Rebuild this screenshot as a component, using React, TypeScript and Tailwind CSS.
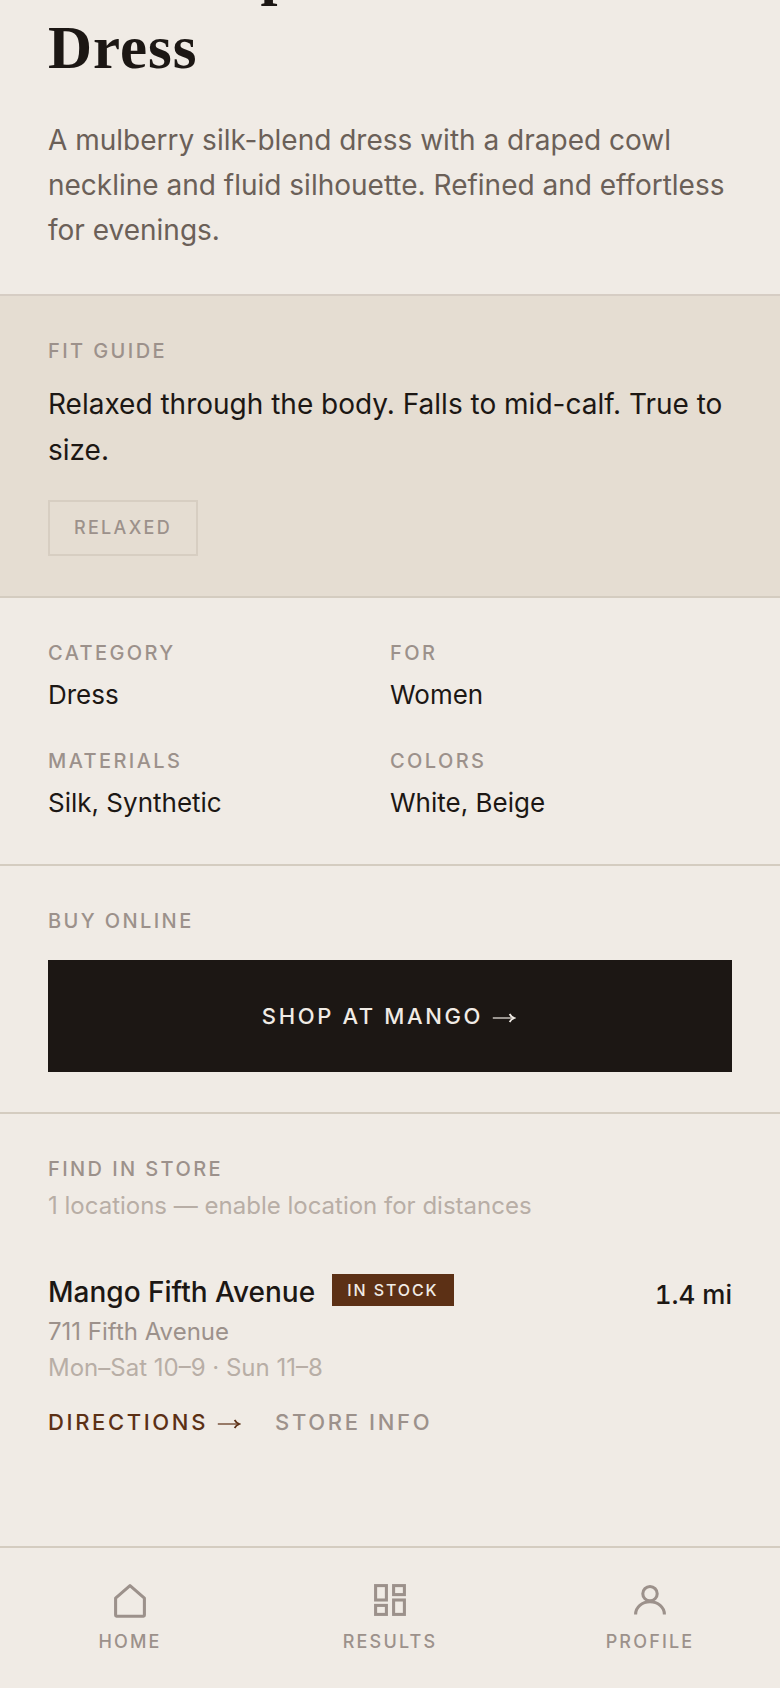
import type { ReactNode } from "react";

const LABEL = "text-[20px] leading-[30px] font-medium tracking-[2.4px] text-[#9c918b]";

function Label({ children }: { children: ReactNode }) {
  return <div className={LABEL}>{children}</div>;
}

function Arrow() {
  return (
    <svg className="mr-[2.6px] inline-block align-[0px]" width="24" height="12" viewBox="0 0 24 12" fill="none" stroke="currentColor">
      <path d="M0.8 6H22" strokeWidth="1.2" />
      <path d="M17.6 2Q19 4.8 22.4 6Q19 7.2 17.6 10" strokeWidth="1.7" />
    </svg>
  );
}

function Detail({ label, value }: { label: string; value: string }) {
  return (
    <div>
      <Label>{label}</Label>
      <div className="mt-[7px] h-[41px] text-[26px] leading-[39px] text-[#1c1714]">{value}</div>
    </div>
  );
}

function NavItem({ label, children }: { label: string; children: ReactNode }) {
  return (
    <a className="flex flex-1 flex-col items-center pt-[34px] text-[#9c918b]">
      <svg width="36" height="36" viewBox="0 0 20 20" fill="none" stroke="currentColor" strokeWidth="1.7">
        {children}
      </svg>
      <span className="mt-[10px] text-[18px] leading-[27px] font-medium tracking-[2.16px]">{label}</span>
    </a>
  );
}

export default function App() {
  return (
    <div className="flex h-[1688px] w-[780px] flex-col overflow-hidden bg-[#f0ebe5] font-['Inter',sans-serif] text-[#1c1714]">
      <section className="flex h-[296px] shrink-0 flex-col justify-end border-b-2 border-[#d6cdc4] px-12 pb-[41.6px]">
        <h1 className="shrink-0 font-['Liberation_Serif',serif] text-[61px] leading-[75px] font-bold">
          <span className="tracking-[-0.7px]">Satin Slip</span>
          <br />
          <span className="tracking-[1px]">Dress</span>
        </h1>
        <p className="mt-[33.5px] shrink-0 text-[28px] leading-[44.8px] text-[#6b6058]">
          A mulberry silk-blend dress with a draped cowl neckline and fluid silhouette. Refined and effortless for
          evenings.
        </p>
      </section>

      <section className="h-[302px] shrink-0 border-b-2 border-[#d4ccc0] bg-[#e5ddd2] px-12 pt-10">
        <Label>FIT GUIDE</Label>
        <p className="mt-4 text-[28px] leading-[45.5px]">Relaxed through the body. Falls to mid-calf. True to size.</p>
        <div className="mt-[27px] flex h-14 w-fit items-center border-2 border-[#d7cec2] px-6 pb-px text-[18px] leading-[27px] font-medium tracking-[2.3px] text-[#9c918b]">
          RELAXED
        </div>
      </section>

      <section className="grid h-[268px] shrink-0 grid-cols-2 content-start gap-y-[30px] border-b-2 border-[#d4ccc0] px-12 pt-10">
        <Detail label="CATEGORY" value="Dress" />
        <Detail label="FOR" value="Women" />
        <Detail label="MATERIALS" value="Silk, Synthetic" />
        <Detail label="COLORS" value="White, Beige" />
      </section>

      <section className="h-[248px] shrink-0 border-b-2 border-[#d4ccc0] px-12 pt-10">
        <Label>BUY ONLINE</Label>
        <button className="mt-6 flex h-28 w-full items-center justify-center bg-[#1c1714] text-[22px] font-medium tracking-[2.64px] text-[#f0ebe5]">
          <span>
            SHOP AT MANGO <Arrow />
          </span>
        </button>
      </section>

      <section className="flex-1 px-12 pt-10">
        <Label>FIND IN STORE</Label>
        <p className="mt-1 text-[24px] leading-9 text-[#b8aea6]">1 locations — enable location for distances</p>
        <div className="mt-[46px] flex items-start justify-between">
          <div className="flex items-start gap-[17px]">
            <h2 className="pt-px text-[28px] leading-[42px] font-medium">Mango Fifth Avenue</h2>
            <span className="mt-1 flex h-8 w-[122px] items-center bg-[#5c3015] pl-[15px] text-[16px] font-medium tracking-[1.92px] text-[#f0ebe5]">
              IN STOCK
            </span>
          </div>
          <span className="mt-[5px] text-[26px] leading-[39px] font-medium tabular-nums">1.4 mi</span>
        </div>
        <p className="text-[24px] leading-9 text-[#9c918b]">711 Fifth Avenue</p>
        <p className="text-[24px] leading-9 text-[#b8aea6]">Mon–Sat 10–9 · Sun 11–8</p>
        <div className="mt-5 flex gap-8 text-[22px] leading-[33px] font-medium tracking-[2.64px]">
          <a className="text-[#5c3015]">
            DIRECTIONS <Arrow />
          </a>
          <a className="text-[#9c918b]">STORE INFO</a>
        </div>
      </section>

      <nav className="flex h-[142px] shrink-0 border-t-2 border-[#d4ccc0]">
        <NavItem label="HOME">
          <path d="M2 9L10 2L18 9V18.5Q18 19 17.5 19H2.5Q2 19 2 18.5Z" strokeLinejoin="round" />
        </NavItem>
        <NavItem label="RESULTS">
          <rect x="2" y="2" width="6" height="8" />
          <rect x="12" y="2" width="6" height="5" />
          <rect x="12" y="10" width="6" height="8" />
          <rect x="2" y="13" width="6" height="5" />
        </NavItem>
        <NavItem label="PROFILE">
          <circle cx="10" cy="6.5" r="4" />
          <path d="M2 18c0-4 3.6-7 8-7s8 3 8 7" />
        </NavItem>
      </nav>
    </div>
  );
}
